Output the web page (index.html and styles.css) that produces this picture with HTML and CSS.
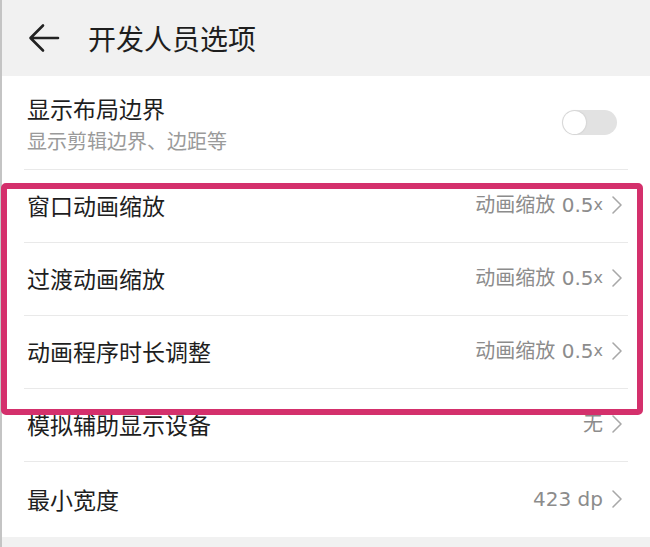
FILE: index.html
```html
<!DOCTYPE html>
<html lang="zh-CN">
<head>
<meta charset="utf-8">
<title>开发人员选项</title>
<link rel="stylesheet" href="styles.css">
</head>
<body>
<div class="screen">
  <header class="appbar">
    <svg class="back" width="32" height="30" viewBox="0 0 32 30" aria-hidden="true">
      <path d="M30 15 H3 M15 2.5 L2.5 15 L15 27.5" fill="none" stroke="#222" stroke-width="2.6" stroke-linecap="round" stroke-linejoin="round"/>
    </svg>
    <h1 class="title">开发人员选项</h1>
  </header>
  <main class="list">
    <div class="row row-tall">
      <div class="texts">
        <div class="label">显示布局边界</div>
        <div class="sub">显示剪辑边界、边距等</div>
      </div>
      <span class="toggle"><span class="knob"></span></span>
    </div>
    <div class="row">
      <div class="label">窗口动画缩放</div>
      <div class="value">动画缩放 0.5<span class="x">x</span><svg class="chev" width="12" height="20" viewBox="0 0 12 20"><path d="M2 2 L10 10 L2 18" fill="none" stroke="#a8a8a8" stroke-width="1.6" stroke-linecap="round" stroke-linejoin="round"/></svg></div>
    </div>
    <div class="row">
      <div class="label">过渡动画缩放</div>
      <div class="value">动画缩放 0.5<span class="x">x</span><svg class="chev" width="12" height="20" viewBox="0 0 12 20"><path d="M2 2 L10 10 L2 18" fill="none" stroke="#a8a8a8" stroke-width="1.6" stroke-linecap="round" stroke-linejoin="round"/></svg></div>
    </div>
    <div class="row">
      <div class="label">动画程序时长调整</div>
      <div class="value">动画缩放 0.5<span class="x">x</span><svg class="chev" width="12" height="20" viewBox="0 0 12 20"><path d="M2 2 L10 10 L2 18" fill="none" stroke="#a8a8a8" stroke-width="1.6" stroke-linecap="round" stroke-linejoin="round"/></svg></div>
    </div>
    <div class="row">
      <div class="label">模拟辅助显示设备</div>
      <div class="value">无<svg class="chev" width="12" height="20" viewBox="0 0 12 20"><path d="M2 2 L10 10 L2 18" fill="none" stroke="#a8a8a8" stroke-width="1.6" stroke-linecap="round" stroke-linejoin="round"/></svg></div>
    </div>
    <div class="row row-last">
      <div class="label">最小宽度</div>
      <div class="value">423 dp<svg class="chev" width="12" height="20" viewBox="0 0 12 20"><path d="M2 2 L10 10 L2 18" fill="none" stroke="#a8a8a8" stroke-width="1.6" stroke-linecap="round" stroke-linejoin="round"/></svg></div>
    </div>
  </main>
  <footer class="bottom"></footer>
  <div class="highlight"></div>
</div>
</body>
</html>
```

FILE: styles.css
```css
* { box-sizing: border-box; }
html, body { margin: 0; padding: 0; }
body {
  width: 650px;
  height: 547px;
  overflow: hidden;
  background: #fff;
  font-family: "Noto Sans CJK SC", "Noto Sans", sans-serif;
  color: #222;
}
.screen {
  position: relative;
  width: 650px;
  height: 547px;
  display: flex;
  flex-direction: column;
  border-left: 2px solid #c4c4c4;
}
.appbar {
  height: 76px;
  flex: none;
  background: #f1f1f1;
  display: flex;
  align-items: center;
  padding-left: 26px;
  padding-bottom: 1px;
}
.back { display: block; }
.title {
  margin: 0 0 0 28px;
  font-size: 28px;
  font-weight: 400;
  line-height: 36px;
  color: #1e1e1e;
}
.list {
  flex: none;
  background: #fff;
}
.row {
  margin: 0 22px 0 22px;
  height: 73px;
  border-bottom: 1px solid #e9e9e9;
  display: flex;
  align-items: center;
  justify-content: space-between;
  padding-left: 3px;
  padding-bottom: 2px;
}
.row-tall {
  height: 94px;
  padding-top: 0;
  padding-bottom: 0;
}
.row-last {
  height: 75px;
  border-bottom: none;
}
.texts {
  display: flex;
  flex-direction: column;
  gap: 4px;
  padding-top: 2px;
}
.label {
  font-size: 23px;
  line-height: 30px;
  color: #1e1e1e;
}
.sub {
  font-size: 20px;
  line-height: 28px;
  color: #9a9a9a;
}
.value {
  display: flex;
  align-items: center;
  font-family: "DejaVu Sans", "Noto Sans CJK SC", sans-serif;
  font-size: 20px;
  line-height: 28px;
  color: #8c8c8c;
  margin-right: 5px;
  white-space: pre;
}
.x { font-size: 16px; }
.chev { display: block; margin-left: 8px; }
.toggle {
  width: 55px;
  height: 25px;
  border-radius: 13px;
  background: #e2e2e2;
  margin-right: 11px;
  display: flex;
  align-items: center;
  padding-left: 1px;
}
.knob {
  width: 23px;
  height: 23px;
  border-radius: 50%;
  background: #fff;
  box-shadow: 0 0 2px rgba(0,0,0,0.18);
}
.bottom {
  flex: 1;
  background: #f1f1f1;
}
.highlight {
  position: absolute;
  left: -1px;
  top: 183px;
  width: 642px;
  height: 232px;
  border: 6px solid #d4306c;
  border-radius: 5px;
  pointer-events: none;
}
```
